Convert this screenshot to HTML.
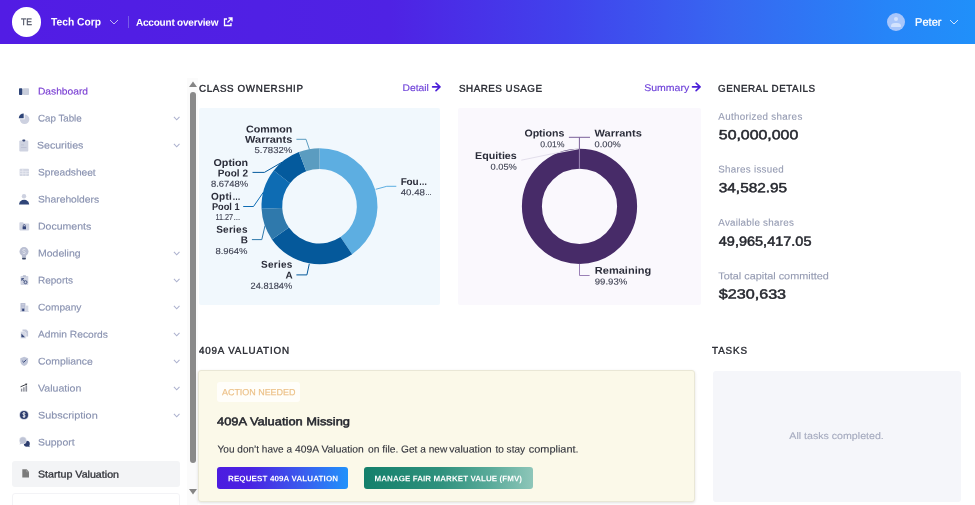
<!DOCTYPE html>
<html><head><meta charset="utf-8">
<style>
*{box-sizing:border-box;margin:0;padding:0}
html,body{width:975px;height:505px;overflow:hidden;background:#fff;font-family:"Liberation Sans",sans-serif;}
.a{position:absolute;white-space:nowrap;line-height:1}
.t{position:absolute;left:0;top:0;white-space:nowrap;line-height:1;transform-origin:0 0}
#hdr{position:absolute;left:0;top:0;width:975px;height:43.6px;background:linear-gradient(90deg,#521ce4 0%,#4f22e4 40%,#4142ec 58%,#3768f1 75%,#2685f8 91%,#2090fa 100%);}
</style></head><body><div id="wrap" style="position:absolute;left:0;top:0;width:975px;height:505px;will-change:transform;overflow:hidden">
<div id="hdr"></div>
<div class="a" style="left:11.8px;top:7px;width:29.4px;height:29.6px;border-radius:50%;background:#fff;"></div>
<div class="a" style="left:128px;top:16px;width:1px;height:12.2px;background:#775be8"></div>
<!-- sidebar boxes -->
<div class="a" style="left:12px;top:461px;width:168.3px;height:26px;border-radius:3px;background:#f3f4f6"></div>
<div class="a" style="left:12px;top:493px;width:168.3px;height:26px;border-radius:3px;border:1px solid #f3f3f6"></div>
<!-- scrollbar -->
<div class="a" style="left:187px;top:78px;width:11px;height:427px;background:#fbfbfb"></div>
<svg class="a" style="left:189px;top:81.3px" width="8" height="6" viewBox="0 0 8 6"><path d="M0 6 L4 0.5 L8 6Z" fill="#858585"/></svg>
<div class="a" style="left:190px;top:91.5px;width:6px;height:371.5px;border-radius:3px;background:#8a8a8a"></div>
<svg class="a" style="left:189px;top:489px" width="8" height="6" viewBox="0 0 8 6"><path d="M0 0 L4 5.5 L8 0Z" fill="#858585"/></svg>
<!-- panels -->
<div class="a" style="left:198.5px;top:108.2px;width:241.9px;height:196.6px;background:#f1f8fd;border-radius:2px"></div>
<div class="a" style="left:458.3px;top:108.2px;width:242.5px;height:196.6px;background:#faf8fd;border-radius:2px"></div>
<div class="a" style="left:198px;top:370px;width:497px;height:132px;background:#fbf9e9;border:1px solid #e9e7d6;border-radius:3px;box-shadow:0 1px 3px rgba(0,0,0,.12)"></div>
<div class="a" style="left:217px;top:382.4px;width:82.6px;height:19.6px;background:#fffefa;border-radius:3px"></div>
<div class="a" style="left:217.3px;top:467.4px;width:131.2px;height:21.5px;border-radius:3px;background:linear-gradient(90deg,#4c1ce0 0%,#4a22e2 25%,#3a5cee 65%,#2092fb 100%)"></div>
<div class="a" style="left:363.5px;top:467.4px;width:169.6px;height:21.5px;border-radius:3px;background:linear-gradient(90deg,#14806b 0%,#2f917d 45%,#5aab9a 75%,#8ec6b9 100%)"></div>
<div class="a" style="left:712.5px;top:370.5px;width:248px;height:131.8px;background:#f5f6fa;border-radius:3px"></div>

<div class="t" style="transform:translate(21.00px,18.20px) rotate(.03deg) scaleX(0.9247);font-size:9.3px;font-weight:normal;color:#4d5263;-webkit-text-stroke:0.3px #4d5263;">TE</div>
<div class="t" style="transform:translate(51.00px,16.50px) rotate(.03deg) scaleX(0.9425);font-size:10.9px;font-weight:bold;color:#fff;">Tech Corp</div>
<div class="t" style="transform:translate(136.00px,17.70px) rotate(.03deg);font-size:10px;font-weight:bold;color:#fff;letter-spacing:-0.207px;">Account overview</div>
<div class="t" style="transform:translate(915.00px,16.80px) rotate(.03deg);font-size:11px;font-weight:normal;color:#fff;letter-spacing:0.049px;-webkit-text-stroke:.3px #fff;">Peter</div>
<div class="t" style="transform:translate(38.00px,86.60px) rotate(.03deg) scaleX(1.0546);font-size:9.7px;font-weight:normal;color:#7a3fd3;-webkit-text-stroke:0.15px #7a3fd3;">Dashboard</div>
<div class="t" style="transform:translate(38.00px,113.60px) rotate(.03deg) scaleX(1.0056);font-size:9.7px;font-weight:normal;color:#8992b0;-webkit-text-stroke:0.15px #8992b0;">Cap Table</div>
<div class="t" style="transform:translate(37.00px,140.60px) rotate(.03deg) scaleX(1.0904);font-size:9.7px;font-weight:normal;color:#8992b0;-webkit-text-stroke:0.15px #8992b0;">Securities</div>
<div class="t" style="transform:translate(38.00px,167.60px) rotate(.03deg) scaleX(1.0502);font-size:9.7px;font-weight:normal;color:#8992b0;-webkit-text-stroke:0.15px #8992b0;">Spreadsheet</div>
<div class="t" style="transform:translate(38.00px,194.60px) rotate(.03deg) scaleX(1.0602);font-size:9.7px;font-weight:normal;color:#8992b0;-webkit-text-stroke:0.15px #8992b0;">Shareholders</div>
<div class="t" style="transform:translate(38.00px,221.60px) rotate(.03deg) scaleX(1.0856);font-size:9.7px;font-weight:normal;color:#8992b0;-webkit-text-stroke:0.15px #8992b0;">Documents</div>
<div class="t" style="transform:translate(38.00px,248.60px) rotate(.03deg) scaleX(1.0831);font-size:9.7px;font-weight:normal;color:#8992b0;-webkit-text-stroke:0.15px #8992b0;">Modeling</div>
<div class="t" style="transform:translate(38.00px,275.60px) rotate(.03deg) scaleX(1.0316);font-size:9.7px;font-weight:normal;color:#8992b0;-webkit-text-stroke:0.15px #8992b0;">Reports</div>
<div class="t" style="transform:translate(38.00px,302.60px) rotate(.03deg) scaleX(1.0464);font-size:9.7px;font-weight:normal;color:#8992b0;-webkit-text-stroke:0.15px #8992b0;">Company</div>
<div class="t" style="transform:translate(38.00px,329.60px) rotate(.03deg) scaleX(1.0553);font-size:9.7px;font-weight:normal;color:#8992b0;-webkit-text-stroke:0.15px #8992b0;">Admin Records</div>
<div class="t" style="transform:translate(38.00px,356.60px) rotate(.03deg) scaleX(1.0711);font-size:9.7px;font-weight:normal;color:#8992b0;-webkit-text-stroke:0.15px #8992b0;">Compliance</div>
<div class="t" style="transform:translate(38.00px,383.60px) rotate(.03deg) scaleX(1.0934);font-size:9.7px;font-weight:normal;color:#8992b0;-webkit-text-stroke:0.15px #8992b0;">Valuation</div>
<div class="t" style="transform:translate(38.00px,410.60px) rotate(.03deg) scaleX(1.1197);font-size:9.7px;font-weight:normal;color:#8992b0;-webkit-text-stroke:0.15px #8992b0;">Subscription</div>
<div class="t" style="transform:translate(38.00px,437.60px) rotate(.03deg) scaleX(1.0783);font-size:9.7px;font-weight:normal;color:#8992b0;-webkit-text-stroke:0.15px #8992b0;">Support</div>
<div class="t" style="transform:translate(38.00px,469.60px) rotate(.03deg) scaleX(1.0795);font-size:9.9px;font-weight:normal;color:#2f3138;-webkit-text-stroke:0.28px #2f3138;">Startup Valuation</div>
<div class="t" style="transform:translate(199.00px,83.80px) rotate(.03deg);font-size:9.8px;font-weight:normal;color:#25272f;letter-spacing:0.622px;-webkit-text-stroke:0.35px #25272f;">CLASS OWNERSHIP</div>
<div class="t" style="transform:translate(459.00px,83.80px) rotate(.03deg);font-size:9.8px;font-weight:normal;color:#25272f;letter-spacing:0.517px;-webkit-text-stroke:0.35px #25272f;">SHARES USAGE</div>
<div class="t" style="transform:translate(718.00px,83.80px) rotate(.03deg);font-size:9.8px;font-weight:normal;color:#25272f;letter-spacing:0.550px;-webkit-text-stroke:0.35px #25272f;">GENERAL DETAILS</div>
<div class="t" style="transform:translate(199.00px,345.80px) rotate(.03deg);font-size:9.8px;font-weight:normal;color:#25272f;letter-spacing:0.835px;-webkit-text-stroke:0.35px #25272f;">409A VALUATION</div>
<div class="t" style="transform:translate(712.00px,345.80px) rotate(.03deg);font-size:9.8px;font-weight:normal;color:#25272f;letter-spacing:0.897px;-webkit-text-stroke:0.35px #25272f;">TASKS</div>
<div class="t" style="transform:translate(402.60px,82.90px) rotate(.03deg) scaleX(1.0719);font-size:9.6px;font-weight:normal;color:#6e42d9;-webkit-text-stroke:0.15px #6e42d9;">Detail</div>
<div class="t" style="transform:translate(644.20px,82.90px) rotate(.03deg) scaleX(1.0962);font-size:9.6px;font-weight:normal;color:#6e42d9;-webkit-text-stroke:0.15px #6e42d9;">Summary</div>
<div class="t" style="transform:translate(718.30px,111.80px) rotate(.03deg);font-size:9.8px;font-weight:normal;color:#959bb2;letter-spacing:0.314px;-webkit-text-stroke:0.12px #959bb2;">Authorized shares</div>
<div class="t" style="transform:translate(718.80px,128.30px) rotate(.03deg) scaleX(1.1942);font-size:13.3px;font-weight:normal;color:#25272e;-webkit-text-stroke:0.48px #25272e;">50,000,000</div>
<div class="t" style="transform:translate(718.30px,164.50px) rotate(.03deg);font-size:9.8px;font-weight:normal;color:#959bb2;letter-spacing:0.275px;-webkit-text-stroke:0.12px #959bb2;">Shares issued</div>
<div class="t" style="transform:translate(718.80px,181.20px) rotate(.03deg) scaleX(1.1544);font-size:13.3px;font-weight:normal;color:#25272e;-webkit-text-stroke:0.48px #25272e;">34,582.95</div>
<div class="t" style="transform:translate(718.30px,217.80px) rotate(.03deg);font-size:9.8px;font-weight:normal;color:#959bb2;letter-spacing:0.252px;-webkit-text-stroke:0.12px #959bb2;">Available shares</div>
<div class="t" style="transform:translate(718.80px,234.70px) rotate(.03deg) scaleX(1.0899);font-size:13.3px;font-weight:normal;color:#25272e;-webkit-text-stroke:0.48px #25272e;">49,965,417.05</div>
<div class="t" style="transform:translate(718.30px,271.30px) rotate(.03deg) scaleX(1.1088);font-size:9.8px;font-weight:normal;color:#959bb2;-webkit-text-stroke:0.12px #959bb2;">Total capital committed</div>
<div class="t" style="transform:translate(718.80px,287.60px) rotate(.03deg) scaleX(1.2131);font-size:13.3px;font-weight:normal;color:#25272e;-webkit-text-stroke:0.48px #25272e;">$230,633</div>
<div class="t" style="transform:translate(222.00px,388.30px) rotate(.03deg);font-size:9px;font-weight:normal;color:#ecc188;letter-spacing:-0.043px;-webkit-text-stroke:0.15px #ecc188;">ACTION NEEDED</div>
<div class="t" style="transform:translate(217.00px,416.30px) rotate(.03deg) scaleX(1.1518);font-size:11.2px;font-weight:normal;color:#25272e;-webkit-text-stroke:0.5px #25272e;">409A Valuation Missing</div>
<div class="t" style="transform:translate(217.60px,444.50px) rotate(.03deg) scaleX(1.0034);font-size:10px;font-weight:normal;color:#33353d;-webkit-text-stroke:0.12px #33353d;">You don’t have a</div>
<div class="t" style="transform:translate(295.10px,444.50px) rotate(.03deg) scaleX(1.0323);font-size:10px;font-weight:normal;color:#33353d;-webkit-text-stroke:0.12px #33353d;">409A Valuation</div>
<div class="t" style="transform:translate(368.00px,444.50px) rotate(.03deg) scaleX(1.0280);font-size:10px;font-weight:normal;color:#33353d;-webkit-text-stroke:0.12px #33353d;">on file.</div>
<div class="t" style="transform:translate(401.10px,444.50px) rotate(.03deg) scaleX(1.0110);font-size:10px;font-weight:normal;color:#33353d;-webkit-text-stroke:0.12px #33353d;">Get a new</div>
<div class="t" style="transform:translate(449.20px,444.50px) rotate(.03deg) scaleX(1.0615);font-size:10px;font-weight:normal;color:#33353d;-webkit-text-stroke:0.12px #33353d;">valuation</div>
<div class="t" style="transform:translate(495.40px,444.50px) rotate(.03deg) scaleX(1.0077);font-size:10px;font-weight:normal;color:#33353d;-webkit-text-stroke:0.12px #33353d;">to stay</div>
<div class="t" style="transform:translate(528.80px,444.50px) rotate(.03deg) scaleX(1.0925);font-size:10px;font-weight:normal;color:#33353d;-webkit-text-stroke:0.12px #33353d;">compliant.</div>
<div class="t" style="transform:translate(228.00px,475.30px) rotate(.03deg);font-size:8px;font-weight:bold;color:#fff;letter-spacing:0.123px;">REQUEST 409A VALUATION</div>
<div class="t" style="transform:translate(374.50px,475.30px) rotate(.03deg);font-size:8px;font-weight:bold;color:#fff;letter-spacing:0.065px;">MANAGE FAIR MARKET VALUE (FMV)</div>
<div class="t" style="transform:translate(789.30px,431.00px) rotate(.03deg) scaleX(1.1074);font-size:9.6px;font-weight:normal;color:#a6abbf;-webkit-text-stroke:0.12px #a6abbf;">All tasks completed.</div>
<div class="t" style="transform:translate(245.90px,124.40px) rotate(.03deg) scaleX(1.0704);font-size:10px;font-weight:bold;color:#2b2d3a;">Common</div>
<div class="t" style="transform:translate(245.10px,134.70px) rotate(.03deg) scaleX(1.0979);font-size:10px;font-weight:bold;color:#2b2d3a;">Warrants</div>
<div class="t" style="transform:translate(254.50px,146.00px) rotate(.03deg) scaleX(1.1020);font-size:8.7px;font-weight:normal;color:#414455;-webkit-text-stroke:0.12px #414455;">5.7832%</div>
<div class="t" style="transform:translate(213.50px,158.10px) rotate(.03deg) scaleX(1.0737);font-size:10px;font-weight:bold;color:#2b2d3a;">Option</div>
<div class="t" style="transform:translate(217.80px,168.40px) rotate(.03deg);font-size:10px;font-weight:bold;color:#2b2d3a;letter-spacing:0.056px;">Pool 2</div>
<div class="t" style="transform:translate(210.90px,179.70px) rotate(.03deg) scaleX(1.0845);font-size:8.7px;font-weight:normal;color:#414455;-webkit-text-stroke:0.12px #414455;">8.6748%</div>
<div class="t" style="transform:translate(210.90px,191.80px) rotate(.03deg);font-size:10px;font-weight:bold;color:#2b2d3a;letter-spacing:0.298px;">Opti</div>
<div class="t" style="transform:translate(232.40px,191.80px) rotate(.03deg) scaleX(0.7996);font-size:10px;font-weight:bold;color:#2b2d3a;">…</div>
<div class="t" style="transform:translate(211.90px,201.70px) rotate(.03deg) scaleX(0.9227);font-size:10px;font-weight:bold;color:#2b2d3a;">Pool 1</div>
<div class="t" style="transform:translate(215.40px,213.20px) rotate(.03deg) scaleX(0.8336);font-size:8.7px;font-weight:normal;color:#414455;-webkit-text-stroke:0.12px #414455;">11.27</div>
<div class="t" style="transform:translate(233.40px,213.20px) rotate(.03deg) scaleX(0.7823);font-size:8.7px;font-weight:normal;color:#414455;-webkit-text-stroke:0.12px #414455;">…</div>
<div class="t" style="transform:translate(216.20px,224.70px) rotate(.03deg);font-size:10px;font-weight:bold;color:#2b2d3a;letter-spacing:0.253px;">Series</div>
<div class="t" style="transform:translate(240.80px,235.20px) rotate(.03deg) scaleX(0.9945);font-size:10px;font-weight:bold;color:#2b2d3a;">B</div>
<div class="t" style="transform:translate(215.40px,246.90px) rotate(.03deg) scaleX(1.0891);font-size:8.7px;font-weight:normal;color:#414455;-webkit-text-stroke:0.12px #414455;">8.964%</div>
<div class="t" style="transform:translate(261.00px,259.70px) rotate(.03deg);font-size:10px;font-weight:bold;color:#2b2d3a;letter-spacing:0.253px;">Series</div>
<div class="t" style="transform:translate(285.50px,270.40px) rotate(.03deg) scaleX(0.9945);font-size:10px;font-weight:bold;color:#2b2d3a;">A</div>
<div class="t" style="transform:translate(250.50px,281.70px) rotate(.03deg) scaleX(1.0678);font-size:8.7px;font-weight:normal;color:#414455;-webkit-text-stroke:0.12px #414455;">24.8184%</div>
<div class="t" style="transform:translate(400.70px,176.90px) rotate(.03deg);font-size:10px;font-weight:bold;color:#2b2d3a;letter-spacing:-0.217px;">Fou</div>
<div class="t" style="transform:translate(419.00px,176.90px) rotate(.03deg) scaleX(0.8196);font-size:10px;font-weight:bold;color:#2b2d3a;">…</div>
<div class="t" style="transform:translate(400.70px,188.20px) rotate(.03deg) scaleX(1.1170);font-size:8.7px;font-weight:normal;color:#414455;-webkit-text-stroke:0.12px #414455;">40.48</div>
<div class="t" style="transform:translate(425.20px,188.20px) rotate(.03deg) scaleX(0.7478);font-size:8.7px;font-weight:normal;color:#414455;-webkit-text-stroke:0.12px #414455;">…</div>
<div class="t" style="transform:translate(524.40px,128.50px) rotate(.03deg) scaleX(1.0586);font-size:10px;font-weight:bold;color:#2b2d3a;">Options</div>
<div class="t" style="transform:translate(540.20px,140.20px) rotate(.03deg);font-size:8.7px;font-weight:normal;color:#414455;letter-spacing:-0.111px;-webkit-text-stroke:0.12px #414455;">0.01%</div>
<div class="t" style="transform:translate(594.50px,128.50px) rotate(.03deg) scaleX(1.1026);font-size:10px;font-weight:bold;color:#2b2d3a;">Warrants</div>
<div class="t" style="transform:translate(594.50px,140.20px) rotate(.03deg) scaleX(1.0671);font-size:8.7px;font-weight:normal;color:#414455;-webkit-text-stroke:0.12px #414455;">0.00%</div>
<div class="t" style="transform:translate(475.10px,151.10px) rotate(.03deg) scaleX(1.0717);font-size:10px;font-weight:bold;color:#2b2d3a;">Equities</div>
<div class="t" style="transform:translate(490.50px,162.80px) rotate(.03deg) scaleX(1.0671);font-size:8.7px;font-weight:normal;color:#414455;-webkit-text-stroke:0.12px #414455;">0.05%</div>
<div class="t" style="transform:translate(594.80px,265.70px) rotate(.03deg) scaleX(1.1031);font-size:10px;font-weight:bold;color:#2b2d3a;">Remaining</div>
<div class="t" style="transform:translate(594.80px,277.40px) rotate(.03deg) scaleX(1.0993);font-size:8.7px;font-weight:normal;color:#414455;-webkit-text-stroke:0.12px #414455;">99.93%</div>
<svg class="a" style="left:0;top:0" width="975" height="505" viewBox="0 0 975 505">
<path d="M319.50 148.20 A58 58 0 0 1 352.15 254.14 L340.50 237.03 A37.3 37.3 0 0 0 319.50 168.90 Z" fill="#5daee1"/>
<path d="M352.15 254.14 A58 58 0 0 1 271.93 239.39 L288.91 227.54 A37.3 37.3 0 0 0 340.50 237.03 Z" fill="#05599b"/>
<path d="M271.93 239.39 A58 58 0 0 1 261.56 208.86 L282.24 207.91 A37.3 37.3 0 0 0 288.91 227.54 Z" fill="#2f79ac"/>
<path d="M261.56 208.86 A58 58 0 0 1 273.76 170.53 L290.09 183.26 A37.3 37.3 0 0 0 282.24 207.91 Z" fill="#0e6cb3"/>
<path d="M273.76 170.53 A58 58 0 0 1 298.88 151.99 L306.24 171.34 A37.3 37.3 0 0 0 290.09 183.26 Z" fill="#045a9d"/>
<path d="M298.88 151.99 A58 58 0 0 1 319.50 148.20 L319.50 168.90 A37.3 37.3 0 0 0 306.24 171.34 Z" fill="#5b9cc0"/>
<polyline points="296.4,139.3 306.0,139.3 309.5,149.7" fill="none" stroke="#5b9cc0" stroke-width="1"/>
<polyline points="252.5,172.4 264.4,172.4 282.2,162.1" fill="none" stroke="#045a9d" stroke-width="1"/>
<polyline points="243.2,206.5 253.5,206.5 263.4,192.2" fill="none" stroke="#0e6cb3" stroke-width="1"/>
<polyline points="251.9,239.6 261.8,239.6 265.0,225.7" fill="none" stroke="#2f79ac" stroke-width="1"/>
<polyline points="296.4,274.9 306.9,274.9 309.3,263.8" fill="none" stroke="#05599b" stroke-width="1"/>
<polyline points="396.3,186.3 386.8,186.3 375.7,189.3" fill="none" stroke="#5daee1" stroke-width="1"/>
<circle cx="579.5" cy="206.3" r="47.6" fill="none" stroke="#472b68" stroke-width="20"/>
<polyline points="568.9,137.3 590.0,137.3" fill="none" stroke="#7a5f99" stroke-width="1"/>
<polyline points="579.4,137.3 579.4,149.0" fill="none" stroke="#7a5f99" stroke-width="1"/>
<polyline points="579.4,148.8 579.4,168.8" fill="none" stroke="#9c87b6" stroke-width="1"/>
<polyline points="521.3,160.2 551.0,154.0 578.7,148.8" fill="none" stroke="#e3dfec" stroke-width="1"/>
<polyline points="579.5,263.8 579.5,275.5 589.6,275.5" fill="none" stroke="#9a80b6" stroke-width="1"/>
</svg>
<svg class="a" style="left:0;top:0" width="200" height="505" viewBox="0 0 200 505">
<!-- dashboard -->
<rect x="19" y="88.2" width="3.4" height="6.8" rx=".8" fill="#2f4578"/><rect x="23" y="88.2" width="6" height="6.8" rx=".8" fill="#c9cedc"/>
<!-- cap table -->
<path d="M24.6 119.3 V114.5 A4.8 4.8 0 1 1 19.8 119.3Z" fill="#cdd1e0"/><path d="M23.7 118.3 V113.4 A4.9 4.9 0 0 0 18.8 118.3Z" fill="#2f4578"/>
<!-- securities -->
<rect x="19.3" y="140.6" width="9" height="11" rx="1" fill="#cfd3e1"/><rect x="22.3" y="139.4" width="3" height="2" rx=".8" fill="#3b4a78"/><rect x="21" y="144.5" width="3" height=".8" fill="#b9bfd2"/><rect x="21" y="147" width="5.5" height=".8" fill="#b9bfd2"/>
<!-- spreadsheet -->
<rect x="19.6" y="168.8" width="9.4" height="7.2" rx=".8" fill="#d3d7e3"/><path d="M19.6 171.3 H29 M19.6 173.6 H29 M22.8 168.8 V176 M25.9 171.3 V176" stroke="#eceef4" stroke-width=".7" fill="none"/>
<!-- shareholders -->
<circle cx="24" cy="196.3" r="2.2" fill="#cdd1e0"/><path d="M19 204.4 A5.1 4.6 0 0 1 29.2 204.4Z" fill="#2f4578"/>
<!-- documents -->
<path d="M19.4 223 a.8 .8 0 0 1 .8 -.8 H23 l1 1.2 H28.4 a.8 .8 0 0 1 .8 .8 V229.6 a.8 .8 0 0 1 -.8 .8 H20.2 a.8 .8 0 0 1 -.8 -.8Z" fill="#cfd3e1"/><rect x="22.6" y="226.2" width="3.4" height="3" rx=".5" fill="#34457a"/><path d="M23.3 226.3 V225.5 a1 1 0 0 1 2 0 V226.3" fill="none" stroke="#34457a" stroke-width=".7"/>
<!-- modeling -->
<circle cx="24" cy="251.6" r="4.5" fill="#b9bed2"/><rect x="21.9" y="254.5" width="4.2" height="3.3" fill="#b9bed2"/><rect x="22.1" y="257.8" width="3.8" height="1.6" rx=".7" fill="#3b4766"/><path d="M25.3 250.2 a1.3 1 0 0 0 -2.6 0 c0 1.5 2.6 1 2.6 2.5 a1.3 1 0 0 1 -2.6 0" fill="none" stroke="#e4e7f0" stroke-width=".8"/>
<!-- reports -->
<rect x="20.5" y="275.9" width="7.8" height="9" rx=".8" fill="#cfd3e1"/><rect x="22.8" y="275.2" width="3.2" height="1.6" rx=".6" fill="#b4bace"/><path d="M21.8 278.6 h2.2 M21.8 278.6 v2.2 M21.8 278.6 l2.6 2.6" stroke="#3a4b7c" stroke-width=".9" fill="none"/><circle cx="25.5" cy="282.2" r="1.5" fill="none" stroke="#3a4b7c" stroke-width=".9"/>
<!-- company -->
<rect x="20.5" y="303.1" width="4.9" height="8.2" fill="#b4bad0"/><rect x="25.4" y="305.6" width="2.9" height="5.7" fill="#d4d8e4"/><rect x="22.2" y="308.7" width="2" height="2.6" fill="#34457a"/><path d="M21.5 304.5 h3 M21.5 306 h3 M21.5 307.5 h3" stroke="#d9dce8" stroke-width=".6"/><rect x="20" y="311" width="8.8" height=".6" fill="#c5cadb"/>
<!-- admin records -->
<path d="M22.5 329.4 h3.8 l1.8 1.8 v5.4 h-5.6z" fill="#c3c8da"/><path d="M20.5 331.4 h3.8 l1.8 1.8 v5.2 h-5.6z" fill="#d4d8e5" stroke="#fff" stroke-width=".4"/><path d="M21.4 337.3 V333.6 L25 337.3Z" fill="#3a4b7c"/>
<!-- compliance -->
<path d="M24.2 356.8 L28.1 358.2 V361 C28.1 363.6 26.3 365.2 24.2 365.9 C22.1 365.2 20.3 363.6 20.3 361 V358.2Z" fill="#bfc5d8"/><path d="M22.4 361 L23.8 362.3 L26.2 359.7" fill="none" stroke="#3a4b7c" stroke-width="1"/>
<!-- valuation -->
<rect x="20.9" y="388.6" width="1.4" height="3" fill="#8b8e98"/><rect x="23.2" y="387.2" width="1.4" height="4.4" fill="#8b8e98"/><rect x="25.5" y="385.6" width="1.6" height="6" fill="#8b8e98"/><path d="M20.5 386.8 L26.6 384.2" stroke="#3d3f46" stroke-width="1" fill="none"/><path d="M25.2 383.5 L27.4 383.8 L26.4 385.6Z" fill="#3d3f46"/>
<!-- subscription -->
<circle cx="24" cy="415" r="4.8" fill="#c5cadb"/><circle cx="24" cy="415" r="4" fill="#2d3d6e"/><path d="M25.2 413.7 a1.2 .9 0 0 0 -2.4 0 c0 1.4 2.4 .9 2.4 2.3 a1.2 .9 0 0 1 -2.4 0 M24 412 v6" fill="none" stroke="#fff" stroke-width=".8"/>
<!-- support -->
<circle cx="26.8" cy="443.8" r="3" fill="#2d3d6e"/><path d="M27.5 446 L29.8 447.3 L28.8 444.8Z" fill="#2d3d6e"/><circle cx="22.9" cy="440.4" r="3.6" fill="#bfc4d6" stroke="#fff" stroke-width=".4"/><path d="M20.5 442.5 L19.4 444.6 L22 443.8Z" fill="#bfc4d6"/>
<!-- startup valuation -->
<path d="M22.3 469.3 H26.6 L29 471.8 V477.5 H22.3Z" fill="#7b7b7b"/><path d="M26.6 469.3 V471.8 H29" fill="none" stroke="#a8a8a8" stroke-width=".6"/>
<!-- chevrons -->
<g fill="none" stroke="#aeb3cf" stroke-width="1.1">
<path d="M173.9 116.9 l2.8 2.9 l2.8 -2.9"/><path d="M173.9 143.9 l2.8 2.9 l2.8 -2.9"/><path d="M173.9 251.9 l2.8 2.9 l2.8 -2.9"/><path d="M173.9 278.9 l2.8 2.9 l2.8 -2.9"/><path d="M173.9 305.9 l2.8 2.9 l2.8 -2.9"/><path d="M173.9 332.9 l2.8 2.9 l2.8 -2.9"/><path d="M173.9 359.9 l2.8 2.9 l2.8 -2.9"/><path d="M173.9 386.9 l2.8 2.9 l2.8 -2.9"/><path d="M173.9 413.9 l2.8 2.9 l2.8 -2.9"/>
</g>
</svg>
<!-- header icons -->
<svg class="a" style="left:109px;top:18.2px" width="10" height="8" viewBox="0 0 10 8"><path d="M1 2 L5 6 L9 2" fill="none" stroke="#c3b8f3" stroke-width="1"/></svg>
<svg class="a" style="left:223px;top:16.9px" width="10" height="10" viewBox="0 0 10 10"><path d="M4 2 H1.5 V8.5 H8 V6" fill="none" stroke="#fff" stroke-width="1.3"/><path d="M5.5 1 H9 V4.5 M9 1 L4.5 5.5" fill="none" stroke="#fff" stroke-width="1.3"/></svg>
<div class="a" style="left:887px;top:13px;width:18px;height:18px;border-radius:50%;background:#a8c6fb;overflow:hidden"><div class="a" style="left:6.9px;top:4.2px;width:4.2px;height:4.2px;border-radius:50%;background:#d4e3fd"></div><div class="a" style="left:4.3px;top:9.6px;width:9.4px;height:4.2px;border-radius:4.7px 4.7px 1px 1px/3.6px 3.6px 1px 1px;background:#d4e3fd"></div></div>
<svg class="a" style="left:949px;top:18px" width="10" height="8" viewBox="0 0 10 8"><path d="M1 2 L5 6 L9 2" fill="none" stroke="#d5e6fd" stroke-width="1"/></svg>
<svg class="a" style="left:0;top:0" width="975" height="100" viewBox="0 0 975 100"><g fill="none" stroke="#4b1fd8" stroke-width="1.6" stroke-linecap="round" stroke-linejoin="round"><path d="M432.6 86.9 H439.8 M436 83.2 L440 86.9 L436 90.6"/><path d="M692.5 86.9 H699.9 M696.1 83.2 L700.1 86.9 L696.1 90.6"/></g></svg>

</div></body></html>
